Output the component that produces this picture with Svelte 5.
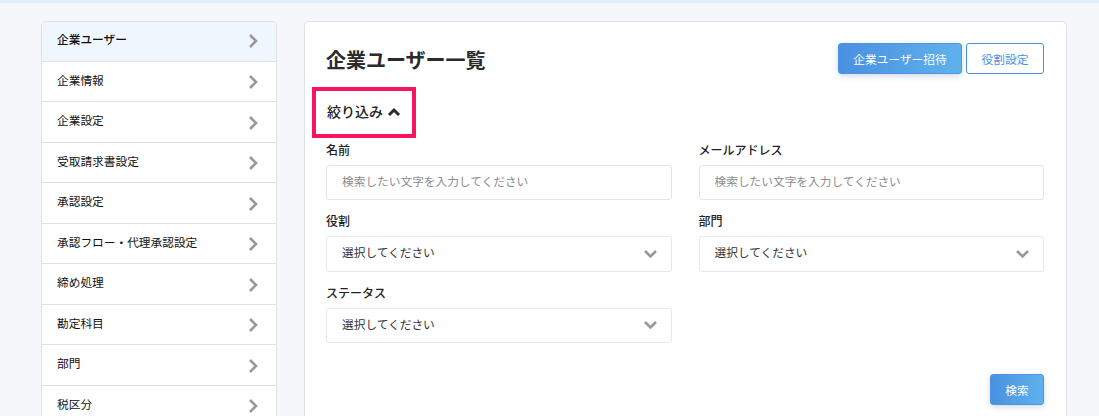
<script>
    const menuItems = [
        "企業ユーザー",
        "企業情報",
        "企業設定",
        "受取請求書設定",
        "承認設定",
        "承認フロー・代理承認設定",
        "締め処理",
        "勘定科目",
        "部門",
        "税区分"
    ];
</script>

<div class="top-bar"></div>

<div class="page">
    <nav class="side-menu">
        {#each menuItems as item, idx}
            <div class="menu-row" class:active={idx === 0}>
                <span>{item}</span>
                <svg class="chevron-right" viewBox="0 0 10 16" width="10" height="16">
                    <path d="M2 2l6 6-6 6" />
                </svg>
            </div>
        {/each}
    </nav>

    <main class="card">
        <div class="card-head">
            <h1>企業ユーザー一覧</h1>
            <div class="head-buttons">
                <button class="btn-primary invite">企業ユーザー招待</button>
                <button class="btn-outline">役割設定</button>
            </div>
        </div>

        <div class="filter-toggle">
            <span>絞り込み</span>
            <svg viewBox="0 0 14 10" width="14" height="10">
                <path d="M2 8l5-5 5 5" />
            </svg>
        </div>

        <div class="filter-grid">
            <div class="field">
                <div class="field-label">名前</div>
                <input class="text-input" placeholder="検索したい文字を入力してください" />
            </div>
            <div class="field">
                <div class="field-label">メールアドレス</div>
                <input class="text-input" placeholder="検索したい文字を入力してください" />
            </div>
            <div class="field">
                <div class="field-label">役割</div>
                <div class="select-box">
                    <span>選択してください</span>
                    <svg viewBox="0 0 15 10" width="15" height="10"><path d="M2 2l5.5 5.5 5.5-5.5" /></svg>
                </div>
            </div>
            <div class="field">
                <div class="field-label">部門</div>
                <div class="select-box">
                    <span>選択してください</span>
                    <svg viewBox="0 0 15 10" width="15" height="10"><path d="M2 2l5.5 5.5 5.5-5.5" /></svg>
                </div>
            </div>
            <div class="field">
                <div class="field-label">ステータス</div>
                <div class="select-box">
                    <span>選択してください</span>
                    <svg viewBox="0 0 15 10" width="15" height="10"><path d="M2 2l5.5 5.5 5.5-5.5" /></svg>
                </div>
            </div>
        </div>

        <div class="search-row">
            <button class="btn-primary search">検索</button>
        </div>
    </main>
</div>

<style>
    :global(html), :global(body) {
        overflow: hidden;
        height: 100%;
    }

    :global(body) {
        background: #f5f7fb;
        font-family: "Noto Sans CJK JP", "Liberation Sans", sans-serif;
        color: #222;
    }

    .top-bar {
        height: 3px;
        background: #e0eefd;
    }

    .page {
        display: flex;
        align-items: flex-start;
        gap: 27px;
        padding: 18px 0 0 41px;
    }

    .side-menu {
        width: 236px;
        flex: none;
        box-sizing: border-box;
        background: #fff;
        border: 1px solid #e1e2e5;
        border-radius: 5px;
        overflow: hidden;
    }

    .menu-row {
        display: flex;
        align-items: center;
        justify-content: space-between;
        box-sizing: border-box;
        height: 40.5px;
        padding: 0 18px 0 15px;
        font-size: 11.7px;
        color: #111;
        border-bottom: 1px solid #e1e2e5;
    }

    .menu-row:first-child {
        height: 39.5px;
    }

    .menu-row span {
        position: relative;
        top: -2px;
    }

    .menu-row.active {
        background: #eff6fe;
        font-weight: 500;
    }

    .menu-row.active span {
        top: -3px;
    }

    .menu-row svg path,
    .select-box svg path {
        fill: none;
        stroke: #999;
        stroke-width: 2.6;
    }

    .menu-row svg {
        position: relative;
        top: 1px;
    }

    .menu-row.active svg {
        top: 0;
    }

    .card {
        width: 763px;
        flex: none;
        box-sizing: border-box;
        min-height: 420px;
        background: #fff;
        border: 1px solid #e1e2e5;
        border-radius: 5px;
        padding: 21px 22px 0 21px;
    }

    .card-head {
        display: flex;
        justify-content: space-between;
        align-items: center;
        height: 31px;
    }

    h1 {
        margin: 0;
        font-size: 20px;
        font-weight: 700;
        color: #2b2b2b;
        position: relative;
        top: 1px;
    }

    .head-buttons {
        display: flex;
        gap: 4px;
    }

    button {
        font-family: inherit;
        font-size: 11.7px;
        height: 31px;
        padding: 0;
        border-radius: 3px;
        box-sizing: border-box;
    }

    .btn-primary {
        color: #fff;
        border: 1px solid #4f93e2;
        background: linear-gradient(90deg, #4a90e2, #5fb2ec);
        box-shadow: 0 2px 6px rgba(70, 110, 160, 0.25);
    }

    .invite {
        width: 124px;
    }

    .search {
        width: 54px;
    }

    .btn-outline {
        width: 78px;
        color: #4a90e2;
        background: #fff;
        border: 1px solid #4a90e2;
    }

    .filter-toggle {
        display: flex;
        align-items: center;
        gap: 4px;
        box-sizing: border-box;
        width: 104px;
        height: 51px;
        margin: 13px 0 0 -14px;
        padding: 0 0 3px 11px;
        border: 4px solid #f8145f;
        font-size: 14px;
        font-weight: 500;
        color: #222;
    }

    .filter-toggle svg path {
        fill: none;
        stroke: #2b2b2b;
        stroke-width: 3;
    }

    .filter-toggle svg {
        position: relative;
        top: 1px;
    }

    .filter-grid {
        display: grid;
        grid-template-columns: 1fr 1fr;
        column-gap: 27px;
        row-gap: 11px;
        margin-top: 2px;
    }

    .field-label {
        font-size: 12px;
        font-weight: 500;
        color: #222;
        height: 25px;
        line-height: 20px;
    }

    .text-input,
    .select-box {
        width: 100%;
        box-sizing: border-box;
        height: 35px;
        background: #fff;
        border-radius: 3px;
        font-family: inherit;
        font-size: 11.7px;
        padding: 0 13px 0 15px;
    }

    .text-input {
        display: block;
        border: 1px solid #dfe5e8;
        outline: none;
        padding-bottom: 4px;
    }

    .text-input::placeholder {
        color: #8c8c8c;
        opacity: 1;
    }

    .select-box {
        display: flex;
        align-items: center;
        justify-content: space-between;
        height: 35.5px;
        border: 1px solid #e8e8e8;
        color: #333;
    }

    .select-box span {
        position: relative;
        top: -2px;
    }

    .search-row {
        display: flex;
        justify-content: flex-end;
        margin-top: 31px;
    }
</style>
